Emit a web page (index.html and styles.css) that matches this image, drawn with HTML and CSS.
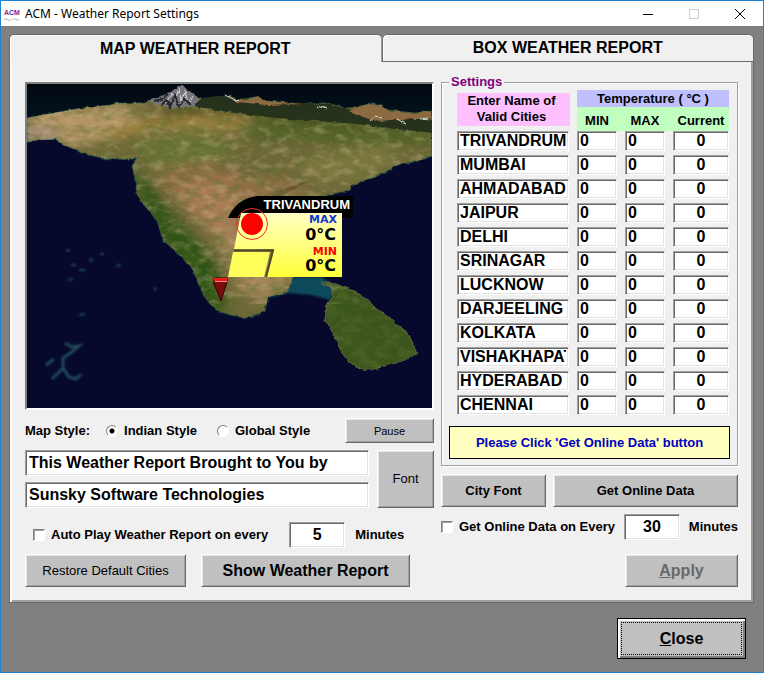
FILE: index.html
```html
<!DOCTYPE html>
<html lang="en">
<head>
    <meta charset="UTF-8">
    <meta name="viewport" content="width=device-width, initial-scale=1.0">
    <title>ACM - Weather Report Settings</title>
    <link rel="stylesheet" href="styles.css">
</head>
<body>
    <header class="titlebar">
        <svg class="app-icon" viewBox="0 0 16 16" aria-hidden="true">
            <defs>
                <linearGradient id="logo" x1="0" y1="0" x2="1" y2="0">
                    <stop offset="0" stop-color="#e0203a"/>
                    <stop offset=".5" stop-color="#2a1fd0"/>
                    <stop offset="1" stop-color="#c01050"/>
                </linearGradient>
            </defs>
            <text y="9" font-size="7" fill="url(#logo)">ACM</text>
            <path d="M0 13h3l1 1h3M8 14l2-1h2l1 1h2" stroke="#b0b0b0" fill="none"/>
        </svg>
        <h1 class="title">ACM - Weather Report Settings</h1>
        <div class="window-buttons">
            <button type="button" aria-label="Minimize"><svg viewBox="0 0 10 10"><path d="M0 5.5h10" stroke="#000"/></svg></button>
            <button type="button" aria-label="Maximize" disabled><svg viewBox="0 0 10 10"><path d="M.5.5h9v9h-9z" stroke="#ccc" fill="none"/></svg></button>
            <button type="button" aria-label="Close window"><svg viewBox="0 0 10 10"><path d="M0 0l10 10M10 0L0 10" stroke="#000"/></svg></button>
        </div>
    </header>

    <main class="client">
        <div class="tabs" role="tablist">
            <button type="button" class="tab active" role="tab" aria-selected="true">MAP WEATHER REPORT</button>
            <button type="button" class="tab" role="tab" aria-selected="false">BOX WEATHER REPORT</button>
        </div>

        <div class="panel" role="tabpanel">
            <section class="left">
                <svg class="map" viewBox="0 0 405 324" role="img" aria-label="Weather map">
                    <defs>
                        <linearGradient id="sky" x1="0" y1="0" x2="0" y2="1">
                            <stop offset="0" stop-color="#020810"/>
                            <stop offset="1" stop-color="#041420"/>
                        </linearGradient>
                        <linearGradient id="card" x1="0" y1="0" x2="0" y2="1">
                            <stop offset="0" stop-color="#ffffc4"/>
                            <stop offset="1" stop-color="#ffff38"/>
                        </linearGradient>
                        <filter id="soft" x="-30%" y="-30%" width="160%" height="160%"><feGaussianBlur stdDeviation="6"/></filter>
                        <filter id="haze" x="-30%" y="-30%" width="160%" height="160%"><feGaussianBlur stdDeviation="1"/></filter>
                        <filter id="rough">
                            <feTurbulence type="fractalNoise" baseFrequency="0.15" numOctaves="3" seed="4"/>
                            <feDisplacementMap in="SourceGraphic" scale="4" xChannelSelector="R" yChannelSelector="G"/>
                        </filter>
                        <!-- dark and light grain of the terrain -->
                        <filter id="grain-dark" x="0" y="0" width="100%" height="100%">
                            <feTurbulence type="fractalNoise" baseFrequency="0.07 0.12" numOctaves="5" seed="7"/>
                            <feColorMatrix values="0 0 0 0 0.12  0 0 0 0 0.16  0 0 0 0 0.03  2.6 0 0 0 -1.1"/>
                        </filter>
                        <filter id="grain-light" x="0" y="0" width="100%" height="100%">
                            <feTurbulence type="fractalNoise" baseFrequency="0.08 0.14" numOctaves="5" seed="21"/>
                            <feColorMatrix values="0 0 0 0 0.74  0 0 0 0 0.58  0 0 0 0 0.38  0 2.4 0 0 -1.1"/>
                        </filter>
                        <path id="mainland" d="M0 34L43 26 64 23 83 21 91 19 110 19 123 17 170 15 203 12 211 16 228 13 238 17 278 20 298 19 321 24 338 21 348 19 361 26 388 29 405 27V72L391 77 371 81 351 92 325 101 323 106 298 112 281 120 276 150 266 193 261 208 241 213 238 228 228 232 218 234 207 232 193 228 183 220 175 209 170 196 166 186 153 171 145 164 136 156 130 137 121 126 110 111 108 94 105 82 110 74 93 76 80 75 66 72 50 66 36 61 30 55 14 56 0 58Z"/>
                        <path id="island" d="M294 198L308 200 325 206 337 213 348 223 365 236 381 249 386 260 390 269 378 276 351 284 342 286 331 284 322 278 315 269 311 260 306 249 298 236 300 219 306 213 304 204Z"/>
                        <clipPath id="land"><use href="#mainland"/><use href="#island"/></clipPath>
                        <clipPath id="coast"><use href="#mainland"/></clipPath>
                    </defs>

                    <rect width="405" height="324" fill="#06092c"/>
                    <path d="M0 0H405V40H0Z" fill="url(#sky)"/>
                    <path d="M266 193H295L310 205 303 216 285 211 262 209 241 214Z" fill="#0b4c5b" filter="url(#haze)"/>

                    <g filter="url(#rough)">
                        <use href="#mainland" fill="#6e6738" stroke="#1a4a42" stroke-width="1"/>
                        <use href="#island" fill="#3a541b" stroke="#5c6b38" stroke-width="1"/>
                        <g clip-path="url(#coast)">
                            <g filter="url(#soft)">
                                <path d="M0 20H115L90 50 60 60 0 62Z" fill="#b39463"/>
                                <path d="M0 42H30V60H0Z" fill="#a08c76"/>
                                <path d="M80 45L125 28 220 33 250 48 130 44 70 60Z" fill="#a1843f"/>
                                <path d="M110 35L150 22 405 24V48L300 45 210 30Z" fill="#454c1c"/>
                                <path d="M205 38L405 42V62L330 60 230 55Z" fill="#526228"/>
                                <path d="M105 58L170 45 210 60 190 80 125 85Z" fill="#6b7235"/>
                                <path d="M125 88L180 78 230 95 225 125 190 145 160 125Z" fill="#926d45"/>
                                <path d="M145 108L200 95 215 130 215 150 190 155 165 130Z" fill="#a87b54"/>
                                <path d="M210 100L260 95 280 110 245 130 215 115Z" fill="#957047"/>
                                <path d="M270 75L360 60 375 75 330 95 285 100Z" fill="#7e7840"/>
                                <path d="M103 85L118 95 145 130 170 155 190 180 200 230 180 225 150 180 120 135Z" fill="#2f5215"/>
                                <path d="M192 155L215 150 270 190 235 220 208 200Z" fill="#a48458"/>
                            </g>
                            <path d="M195 135L220 125 245 108 290 94 270 104 230 123Z" fill="#574728" opacity=".6"/>
                        </g>
                    </g>
                    <g clip-path="url(#land)">
                        <rect width="405" height="324" filter="url(#grain-dark)" opacity=".6"/>
                        <rect width="405" height="200" y="20" filter="url(#grain-light)" opacity=".35"/>
                    </g>

                    <!-- northern range -->
                    <g filter="url(#rough)">
                        <path d="M165 22L175 15 190 12 205 13 230 17 300 20 330 27 350 32 405 36V49L370 45 330 40 250 34 200 28Z" fill="#26301a"/>
                        <path d="M203 13L220 16 230 12 240 17 275 20 240 21 210 18ZM322 26L338 21 352 20 363 27 388 30 405 27V34L375 36 345 37Z" fill="#8c6a42"/>
                        <path d="M121 17L132 13 144 8 151 2 156 2 165 9 172 14 168 23 155 24 137 23Z" fill="#75757a"/>
                        <path d="M131 18l6-6 1 7 8-10 1 9 5-14 2 13 4-10 3 12 5-7M198 11l10 5 4-1M290 22l10 3M342 37l6-4 7 1M370 35l9 5M393 35l8-1" stroke="#d9d9dd" stroke-width="1" fill="none"/>
                        <path d="M134 22l5-6 4 7 5-12 4 12 6-9 5 8M127 17l8-2 6-5" stroke="#22252a" stroke-width="2" fill="none"/>
                    </g>

                    <!-- coral islands -->
                    <g fill="none" stroke="#22495a" filter="url(#haze)">
                        <path d="M38 259L45 263 52 262 42 270 36 274 36 284 42 293 49 295 54 290M36 284L25 295" stroke-width="3"/>
                        <path d="M19 281L27 275" stroke-width="3"/>
                        <path d="M41 196l5-1M52 231l6-1M128 203v4M44 181h5M52 186h6M62 177l4-2M73 170h4M89 182l5-1M39 166l4 1" stroke-width="2"/>
                    </g>

                    <path d="M187 194h13v4l-6 19-7-17z" fill="#7a0c0c" stroke="#2c0606"/>
                    <path d="M187 195.500h13" stroke="#f01818" stroke-width="3"/>
                    <path d="M188 197.500h12" stroke="#e89090"/>

                    <!-- city card -->
                    <path d="M201 134C206 122 217 112 233 112H326V134Z" fill="#000"/>
                    <path d="M214 129H315V193H240L247 165H207Z" fill="url(#card)"/>
                    <path d="M206 168H243L237 193H201Z" fill="#ffff5c"/>
                    <path d="M207 166.500H246L239 193" fill="none" stroke="#4d4b22" stroke-width="2"/>
                    <circle cx="225" cy="140" r="15.500" fill="none" stroke="#f03028"/>
                    <circle cx="225" cy="140" r="11" fill="#f00"/>
                    <text class="card-city" x="323" y="125">TRIVANDRUM</text>
                    <text class="card-label max" x="310" y="139">MAX</text>
                    <text class="card-temp" x="309" y="156">0°C</text>
                    <text class="card-label min" x="310" y="171">MIN</text>
                    <text class="card-temp" x="309" y="187">0°C</text>
                </svg>

                <div class="row style-row">
                    <span>Map Style:</span>
                    <label><input type="radio" name="style" checked>Indian Style</label>
                    <label><input type="radio" name="style">Global Style</label>
                    <button type="button" class="btn pause">Pause</button>
                </div>

                <div class="captions">
                    <input type="text" class="field" aria-label="Caption line 1" value="This Weather Report Brought to You by">
                    <input type="text" class="field" aria-label="Caption line 2" value="Sunsky Software Technologies">
                    <button type="button" class="btn">Font</button>
                </div>

                <div class="row autoplay">
                    <label><input type="checkbox">Auto Play Weather Report on every</label>
                    <input type="text" class="field minutes" id="play-minutes" value="5">
                    <label for="play-minutes">Minutes</label>
                </div>

                <div class="row actions">
                    <button type="button" class="btn restore">Restore Default Cities</button>
                    <button type="button" class="btn show">Show Weather Report</button>
                </div>
            </section>

            <section class="right">
                <fieldset class="settings">
                    <legend>Settings</legend>
                    <table class="cities">
                        <colgroup>
                            <col>
                            <col class="col-temp">
                            <col class="col-temp">
                            <col class="col-current">
                        </colgroup>
                        <thead>
                            <tr>
                                <th rowspan="2" class="head-city"><div>Enter Name of<br>Valid Cities</div></th>
                                <th colspan="3" class="head-temp">Temperature ( °C )</th>
                            </tr>
                            <tr class="head-cols">
                                <th>MIN</th>
                                <th>MAX</th>
                                <th>Current</th>
                            </tr>
                        </thead>
                        <tbody id="cities"></tbody>
                    </table>
                    <p class="notice">Please Click 'Get Online Data' button</p>
                </fieldset>

                <div class="row online">
                    <button type="button" class="btn bold city-font">City Font</button>
                    <button type="button" class="btn bold get-data">Get Online Data</button>
                </div>

                <div class="row every">
                    <label><input type="checkbox">Get Online Data on Every</label>
                    <input type="text" class="field minutes" id="data-minutes" value="30">
                    <label for="data-minutes">Minutes</label>
                </div>

                <button type="button" class="btn apply" disabled><u>A</u>pply</button>
            </section>
        </div>

        <button type="button" class="btn close"><u>C</u>lose</button>
    </main>

    <script>
        const cities = ['TRIVANDRUM', 'MUMBAI', 'AHMADABAD', 'JAIPUR', 'DELHI', 'SRINAGAR',
            'LUCKNOW', 'DARJEELING', 'KOLKATA', 'VISHAKHAPATNAM', 'HYDERABAD', 'CHENNAI'];

        document.getElementById('cities').innerHTML = cities.map(city => `
            <tr>
                <td><input type="text" class="field" aria-label="City" value="${city}"></td>
                <td><input type="text" class="field" aria-label="${city} min" value="0"></td>
                <td><input type="text" class="field" aria-label="${city} max" value="0"></td>
                <td><input type="text" class="field" aria-label="${city} current" value="0"></td>
            </tr>`).join('');
    </script>
</body>
</html>
```
FILE: styles.css
```css
* {
    box-sizing: border-box;
}

body {
    margin: 0;
    min-height: 100vh;
    border: 1px solid #1883d7;
    background-color: #808080;
    color: #000;
    font: bold 13px/16px "Liberation Sans", Arial, sans-serif;
}

button,
input {
    font: inherit;
    color: inherit;
    margin: 0;
}

/* Title bar */
.titlebar {
    display: flex;
    align-items: center;
    height: 25px;
    padding-left: 3px;
    background-color: #fff;
}

.app-icon {
    width: 16px;
    height: 16px;
    margin-right: 5px;
}

.title {
    flex: 1;
    margin: 0;
    font: 12px/16px "Noto Sans", sans-serif;
}

.window-buttons {
    display: flex;
}

.window-buttons button {
    display: flex;
    align-items: center;
    justify-content: center;
    width: 46px;
    height: 25px;
    padding: 0;
    border: none;
    background: none;
}

.window-buttons svg {
    width: 10px;
    height: 10px;
    overflow: visible;
}

/* Tabs */
.client {
    padding: 8px 9px 13px 8px;
    display: flex;
    flex-direction: column;
}

.tabs {
    display: flex;
}

.tab {
    flex: 1;
    height: 28px;
    padding: 0;
    border: 1px solid #696969;
    border-radius: 5px 5px 0 0;
    background-color: #f0f0f0;
    box-shadow: inset 1px 1px 0 #fff;
    font-size: 16px;
}

.tab.active {
    border-bottom: none;
    border-right-color: #a0a0a0;
}

.panel {
    display: grid;
    grid-template-columns: 409fr 297fr;
    gap: 7px;
    padding: 20px 15px 15px;
    border: 1px solid #696969;
    border-top: none;
    background-color: #f0f0f0;
    box-shadow: inset 2px 0 0 #fff, inset -2px -2px 0 #a0a0a0;
}

.left,
.right {
    min-width: 0;
}

.row {
    display: flex;
    align-items: center;
}

/* Common controls */
.btn {
    padding: 0;
    border: 1px solid;
    border-color: #fff #696969 #696969 #fff;
    background-color: #c0c0c0;
    box-shadow: inset 1px 1px 0 #e3e3e3, inset -1px -1px 0 #a0a0a0;
    font-weight: normal;
    height: 33px;
}

.btn.bold {
    font-weight: bold;
}

.field {
    width: 100%;
    min-width: 0;
    height: 26px;
    padding: 0 2px;
    border: 1px solid;
    border-color: #a0a0a0 #fff #fff #a0a0a0;
    border-radius: 0;
    background-color: #fff;
    box-shadow: inset 1px 1px 0 #696969, inset -1px -1px 0 #e3e3e3;
    font-size: 16px;
}

.field.minutes {
    width: 56px;
    text-align: center;
}

label {
    display: flex;
    align-items: center;
}

input[type="radio"],
input[type="checkbox"] {
    appearance: none;
    width: 12px;
    height: 12px;
    margin-right: 6px;
    border: 1px solid;
    border-color: #808080 #fff #fff #808080;
    background-color: #fff;
}

input[type="checkbox"] {
    box-shadow: inset 1px 1px 0 #a0a0a0;
}

input[type="radio"] {
    border-radius: 50%;
}

input[type="radio"]:checked {
    background-image: radial-gradient(circle, #000 2px, transparent 3px);
}

/* Left side */
.map {
    display: block;
    width: 100%;
    border: 2px solid;
    border-color: #808080 #fff #fff #808080;
}

.map text {
    text-anchor: end;
}

.card-city {
    font-size: 13px;
    fill: #fff;
}

.card-label {
    font: bold 11px "DejaVu Sans", sans-serif;
}

.card-label.max {
    fill: #1038d0;
}

.card-label.min {
    fill: #f00;
}

.card-temp {
    font: bold 16px "DejaVu Sans", sans-serif;
}

.style-row {
    margin-top: 8px;
    gap: 16px;
}

.style-row label {
    margin-right: 4px;
}

.pause {
    width: 89px;
    height: 25px;
    margin-left: auto;
    font-size: 11px;
}

.captions {
    display: grid;
    grid-template-columns: 1fr 57px;
    gap: 6px 8px;
    margin-top: 7px;
}

.captions .field {
    padding-left: 3px;
}

.captions .btn {
    grid-area: 1 / 2 / 3 / 3;
    height: auto;
}

.autoplay {
    margin-top: 14px;
    padding-left: 8px;
}

.autoplay .minutes {
    margin: 0 10px 0 21px;
}

.actions {
    gap: 15px;
    margin-top: 6px;
}

.restore {
    width: 161px;
}

.btn.show {
    width: 209px;
    font-size: 16px;
    font-weight: bold;
}

/* Right side */
.settings {
    min-width: 0;
    margin: -8px 0 0;
    padding: 0 7px 6px;
    border: 1px solid #a0a0a0;
    box-shadow: 1px 1px 0 #fff, inset 1px 1px 0 #fff;
}

.settings legend {
    padding: 0 2px;
    background-color: #f0f0f0;
    color: #800080;
}

.cities {
    width: calc(100% - 9px);
    margin-left: 8px;
    border-collapse: collapse;
    table-layout: fixed;
}

.col-temp {
    width: 48px;
}

.col-current {
    width: 56px;
}

.cities th {
    padding: 0;
}

.cities .head-city {
    padding: 3px 7px 5px 0;
}

.head-city div {
    height: 33px;
    padding-right: 4px;
    background-color: #ffc0ff;
}

.cities .head-temp {
    height: 17px;
    background-color: #c0c0ff;
}

.head-cols th {
    height: 24px;
    padding: 3px 8px 0 0;
    background-color: #c0ffc0;
}

.head-cols th:last-child {
    padding-right: 0;
}

.cities td {
    height: 24px;
    padding: 0 8px 4px 0;
}

.cities td:last-child {
    padding-right: 0;
}

.cities .field {
    display: block;
    height: 20px;
}

.cities td:last-child .field {
    text-align: center;
}

.notice {
    margin: 7px 0 0;
    padding: 8px 0 7px;
    border: 1px solid #000;
    background-color: #ffffc0;
    color: #0000c0;
    text-align: center;
}

.online {
    gap: 7px;
    margin-top: 8px;
}

.city-font {
    width: 105px;
}

.get-data {
    flex: 1;
}

.every {
    justify-content: space-between;
    margin-top: 7px;
}

.apply {
    display: block;
    width: 113px;
    margin: 14px 0 0 auto;
    font-size: 16px;
    font-weight: bold;
    color: #696969;
}

.btn.close {
    align-self: flex-end;
    width: 129px;
    height: 41px;
    margin: 15px 8px 0 0;
    border-color: #000;
    box-shadow: inset 2px 2px 0 #fff, inset -2px -2px 0 #808080;
    outline: 1px dotted #000;
    outline-offset: -5px;
    font-size: 16px;
    font-weight: bold;
}
```
